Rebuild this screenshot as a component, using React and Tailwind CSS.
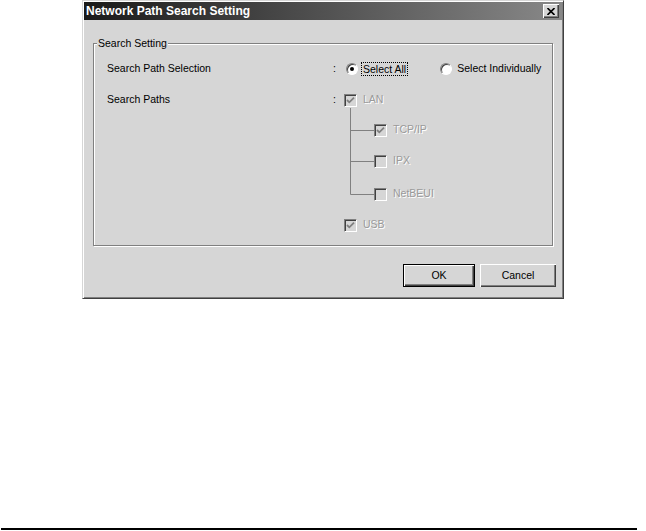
const face = 'bg-[#d6d6d6]'

function CheckBox({ checked }) {
  return (
    <div className="w-[13px] h-[13px] flex-shrink-0 bg-[#d6d6d6] border border-t-[#808080] border-l-[#808080] border-r-white border-b-white shadow-[inset_1px_1px_0_#404040,inset_-1px_-1px_0_#d6d6d6] flex items-center justify-center">
      {checked && (
        <svg width="9" height="9" viewBox="0 0 9 9">
          <path d="M1 4 L3.3 6.3 L8 1.6" fill="none" stroke="#808080" strokeWidth="1.8" />
        </svg>
      )}
    </div>
  )
}

function Radio({ checked }) {
  return (
    <div className="w-[12px] h-[12px] flex-shrink-0 rounded-full bg-white border border-t-[#808080] border-l-[#808080] border-r-white border-b-white shadow-[inset_1px_1px_0_#404040] flex items-center justify-center">
      {checked && <div className="w-[4px] h-[4px] rounded-full bg-black" />}
    </div>
  )
}

function Disabled({ children }) {
  return <span className="text-[#9a9a9a] [text-shadow:1px_1px_0_#fff]">{children}</span>
}

function Button({ children, isDefault }) {
  return (
    <div
      className={`h-[23px] flex items-center justify-center ${face} ${
        isDefault
          ? 'w-[72px] border border-black shadow-[inset_1px_1px_0_#fff,inset_-1px_-1px_0_#404040,inset_-2px_-2px_0_#808080]'
          : 'w-[76px] shadow-[inset_1px_1px_0_#fff,inset_-1px_-1px_0_#404040,inset_-2px_-2px_0_#808080]'
      }`}
    >
      {children}
    </div>
  )
}

export default function App() {
  return (
    <div className="w-[646px] h-[531px] bg-white flex flex-col font-['Liberation_Sans',Arial,sans-serif] text-[10.5px] text-black">
      {/* Dialog window */}
      <div className={`ml-[82px] w-[482px] h-[299px] ${face} border border-t-[#d6d6d6] border-l-[#d6d6d6] border-r-[#404040] border-b-[#404040] shadow-[inset_1px_1px_0_#fff,inset_-1px_-1px_0_#808080] p-[1px] flex flex-col`}>
        {/* Title bar */}
        <div className="h-[18px] flex items-center bg-[linear-gradient(to_right,#1a1a1a,#888888)]">
          <span className="pl-[2px] text-white font-bold text-[12px] leading-none">Network Path Search Setting</span>
          <div className={`ml-auto mr-[3px] w-[16px] h-[14px] ${face} shadow-[inset_1px_1px_0_#fff,inset_-1px_-1px_0_#404040,inset_-2px_-2px_0_#808080] flex items-center justify-center`}>
            <svg width="8" height="7" viewBox="0 0 8 7">
              <path d="M0.5 0 L7.5 7 M7.5 0 L0.5 7" stroke="#000" strokeWidth="1.6" />
            </svg>
          </div>
        </div>

        {/* Group box */}
        <div className="relative ml-[9px] mt-[23px] w-[460px] h-[203px] border border-[#808080] shadow-[1px_1px_0_#fff,inset_1px_1px_0_#fff]">
          <span className={`absolute left-[3px] -top-[7px] px-[1px] leading-[13px] ${face}`}>Search Setting</span>

          <div className="pl-[13px] pt-[17px]">
            {/* Search Path Selection */}
            <div className="h-4 flex items-center">
              <span className="w-[226px]">Search Path Selection</span>
              <span className="w-[11px]">:</span>
              <div className="ml-[2px] flex items-center">
                <Radio checked />
                <span className="ml-[3px] px-[2px] leading-[14px] outline outline-1 outline-dotted outline-black -outline-offset-1">Select All</span>
              </div>
              <div className="ml-[32px] flex items-center">
                <Radio />
                <span className="ml-[5px]">Select Individually</span>
              </div>
            </div>

            {/* Search Paths */}
            <div className="mt-[15px] h-4 flex items-center">
              <span className="w-[226px]">Search Paths</span>
              <span className="w-[11px]">:</span>
              <CheckBox checked />
              <span className="ml-[6px]"><Disabled>LAN</Disabled></span>
            </div>

            {/* Tree of LAN protocols */}
            <div className="ml-[237px] flex">
              <svg width="30" height="94" viewBox="0 0 30 94" className="flex-shrink-0">
                <path d="M6.5 0 V86.5 M6.5 22.5 H30 M6.5 53.5 H30 M6.5 86.5 H30" stroke="#808080" strokeWidth="1" fill="none" />
              </svg>
              <div className="flex flex-col">
                <div className="mt-[14px] h-4 flex items-center">
                  <CheckBox checked />
                  <span className="ml-[6px]"><Disabled>TCP/IP</Disabled></span>
                </div>
                <div className="mt-[15px] h-4 flex items-center">
                  <CheckBox />
                  <span className="ml-[6px]"><Disabled>IPX</Disabled></span>
                </div>
                <div className="mt-[17px] h-4 flex items-center">
                  <CheckBox />
                  <span className="ml-[6px]"><Disabled>NetBEUI</Disabled></span>
                </div>
              </div>
            </div>

            {/* USB */}
            <div className="ml-[237px] mt-[15px] h-4 flex items-center">
              <CheckBox checked />
              <span className="ml-[6px]"><Disabled>USB</Disabled></span>
            </div>
          </div>
        </div>

        {/* Buttons */}
        <div className="mt-[18px] pr-[6px] flex justify-end gap-[5px]">
          <Button isDefault>OK</Button>
          <Button>Cancel</Button>
        </div>
      </div>

      {/* Page rule */}
      <div className="mt-auto mb-[1px] ml-[1px] w-[636px] h-[2px] bg-black" />
    </div>
  )
}
